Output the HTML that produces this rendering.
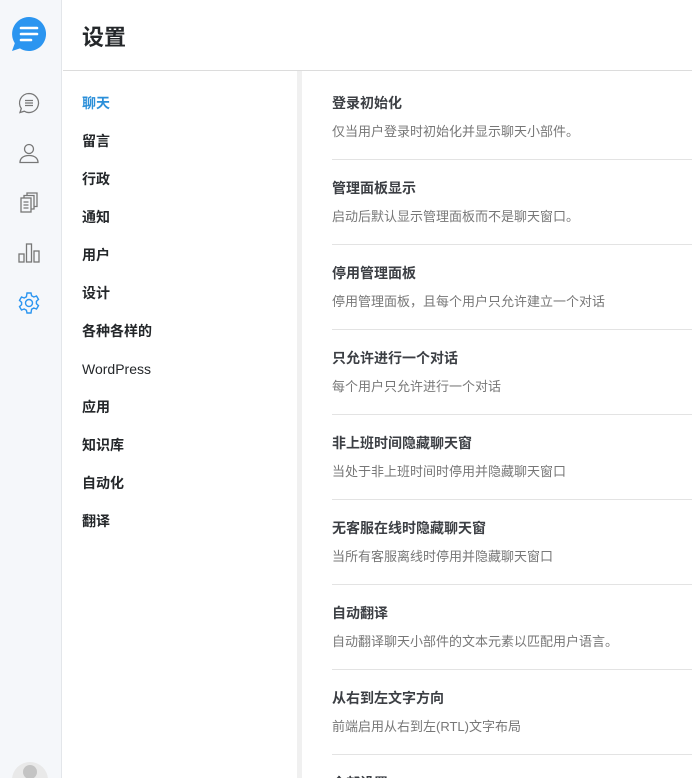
<!DOCTYPE html>
<html style="overflow:hidden;height:778px"><head><meta charset="utf-8"><style>
*{margin:0;padding:0;box-sizing:border-box}
body{width:692px;height:778px;overflow:hidden;background:#fff;font-family:"Liberation Sans","Noto Sans CJK SC",sans-serif;position:relative}
.side{position:absolute;left:0;top:0;width:62px;height:778px;background:#f5f7fa;border-right:1px solid #e3e6ea;overflow:hidden}
.ic{position:absolute;left:17px;width:24px;height:24px}
.head{position:absolute;left:63px;top:0;right:0;height:71px;border-bottom:1px solid #dcdcdc}
.head h1{position:absolute;left:19px;top:20px;font-size:22px;font-weight:bold;color:#24272a}
.nav{position:absolute;left:82px;top:92px}
.nav div{height:38px;font-size:14px;font-weight:bold;color:#24272a;line-height:22px}
.nav div.a{color:#2b8fd9}
.strip{position:absolute;left:297px;top:71px;width:5px;height:707px;background:#f0f0f0}
.items{position:absolute;left:332px;top:75px;right:0;height:703px;overflow:hidden}
.it{height:85px;border-bottom:1px solid #e3e3e3;padding-top:18px}
.it h3{font-size:14px;font-weight:bold;color:#3c3f44;line-height:20px}
.it p{font-size:13px;color:#777;line-height:20px;margin-top:9px}
</style></head><body>
<div class="side">
<svg style="position:absolute;left:11px;top:16px" width="36" height="36" viewBox="0 0 36 36"><path d="M18 1a17 17 0 1 1-9 31.4L1 35l2.8-7.8A17 17 0 0 1 18 1z" fill="#2b95f0"/><path d="M10 12h16M10 18h16M10 24h10" stroke="#fff" stroke-width="2.6" stroke-linecap="round"/></svg>
<svg class="ic" style="top:91px" viewBox="0 0 24 24" fill="none" stroke="#777" stroke-width="1.3"><path d="M12 2.5a9.5 9.5 0 1 1-4.8 17.7L3 21.5l1.3-4A9.5 9.5 0 0 1 12 2.5z"/><path d="M8 9.5h8M8 12h8M8 14.5h8"/></svg>
<svg class="ic" style="top:141px" viewBox="0 0 24 24" fill="none" stroke="#777" stroke-width="1.3"><circle cx="12" cy="8" r="4.5"/><path d="M3 21.5c0-4 3-7 9-7s9 3 9 7z"/></svg>
<svg class="ic" style="top:191px" viewBox="0 0 24 24" fill="none" stroke="#777" stroke-width="1.3"><rect x="4" y="7" width="10" height="14"/><path d="M7 7V4.5h10V18h-3M10 4.5V2h10v13.5h-3M6.5 11h5M6.5 14h5M6.5 17h5"/></svg>
<svg class="ic" style="top:241px" viewBox="0 0 24 24" fill="none" stroke="#777" stroke-width="1.3"><rect x="2" y="13" width="5" height="8"/><rect x="9.5" y="3" width="5" height="18"/><rect x="17" y="10" width="5" height="11"/></svg>
<svg class="ic" style="top:291px" viewBox="0 0 24 24" fill="none" stroke="#2b95f0" stroke-width="1.4"><path d="M10 2h4l.6 2.8 2.2 1.2 2.7-1 2 3.4-2.1 1.9v2.4l2.1 1.9-2 3.4-2.7-1-2.2 1.2L14 22h-4l-.6-2.8-2.2-1.2-2.7 1-2-3.4 2.1-1.9v-2.4L2.5 9.4l2-3.4 2.7 1 2.2-1.2z"/><circle cx="12" cy="12" r="3.5"/></svg>
<div style="position:absolute;left:12px;top:762px;width:36px;height:36px;border-radius:50%;background:#e9e9e9"><div style="position:absolute;left:11px;top:3px;width:14px;height:14px;border-radius:50%;background:#c4c4c4"></div></div>
</div>
<div class="head"><h1>设置</h1></div>
<div class="nav">
<div class="a">聊天</div><div>留言</div><div>行政</div><div>通知</div><div>用户</div><div>设计</div><div>各种各样的</div><div style="font-weight:normal">WordPress</div><div>应用</div><div>知识库</div><div>自动化</div><div>翻译</div>
</div>
<div class="strip"></div>
<div class="items">
<div class="it"><h3>登录初始化</h3><p>仅当用户登录时初始化并显示聊天小部件。</p></div>
<div class="it"><h3>管理面板显示</h3><p>启动后默认显示管理面板而不是聊天窗口。</p></div>
<div class="it"><h3>停用管理面板</h3><p>停用管理面板，且每个用户只允许建立一个对话</p></div>
<div class="it"><h3>只允许进行一个对话</h3><p>每个用户只允许进行一个对话</p></div>
<div class="it"><h3>非上班时间隐藏聊天窗</h3><p>当处于非上班时间时停用并隐藏聊天窗口</p></div>
<div class="it"><h3>无客服在线时隐藏聊天窗</h3><p>当所有客服离线时停用并隐藏聊天窗口</p></div>
<div class="it"><h3>自动翻译</h3><p>自动翻译聊天小部件的文本元素以匹配用户语言。</p></div>
<div class="it"><h3>从右到左文字方向</h3><p>前端启用从右到左(RTL)文字布局</p></div>
<div class="it"><h3>全部设置</h3><p></p></div>
</div>
</body></html>
